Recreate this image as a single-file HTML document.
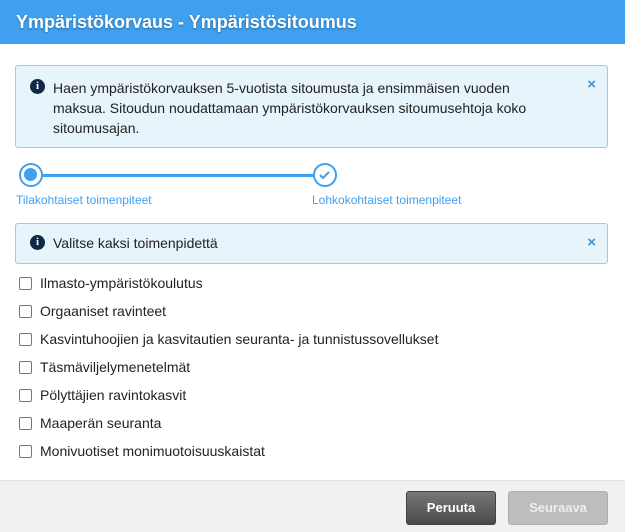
<!DOCTYPE html>
<html><head><meta charset="utf-8"><style>
*{box-sizing:border-box;margin:0;padding:0}
body{width:625px;height:532px;background:#fff;font-family:"Liberation Sans",Arial,sans-serif;color:#222;position:relative;overflow:hidden}
.hdr{position:absolute;left:0;top:0;width:625px;height:44px;background:#3fa0ef;color:#fff;font-weight:bold;font-size:18px;padding:12px 0 0 16px;text-shadow:0 1px 2px rgba(0,0,0,.35)}
.alert{position:absolute;left:15px;width:593px;background:#e7f4fb;border:1px solid #98cdea;border-radius:3px}
.ic{position:absolute;left:14px;width:15px;height:15px;border-radius:50%;background:#0e2a45;color:#fff;font:bold 11px "Liberation Serif",serif;text-align:center;line-height:15px}
.x{position:absolute;right:11px;color:#4a90c8;font-size:15px;font-weight:bold}
.msg{position:absolute;left:37px;font-size:14px;line-height:20px;color:#222}
.circ{position:absolute;width:24px;height:24px;border:2.5px solid #3fa0ef;border-radius:50%;background:#fff;top:163px}
.lbl{position:absolute;top:193px;font-size:12px;color:#3fa0ef}
.cb{position:absolute;left:19px;font-size:14px;color:#222}
.cb span{display:inline-block;width:13px;height:13px;border:1.5px solid #777;border-radius:2px;vertical-align:-2px;margin-right:8px}
.foot{position:absolute;left:0;top:480px;width:625px;height:52px;background:#f1f1f1;border-top:1px solid #e2e2e2}
.btn{position:absolute;top:491px;height:34px;border-radius:3px;color:#fff;font-weight:bold;font-size:13px;text-align:center;line-height:32px}
</style></head><body>
<div class="hdr">Ympäristökorvaus - Ympäristösitoumus</div>
<div class="alert" style="top:65px;height:83px">
<div class="ic" style="top:13px">i</div>
<div class="x" style="top:10px">×</div>
<div class="msg" style="top:12px;width:480px">Haen ympäristökorvauksen 5-vuotista sitoumusta ja ensimmäisen vuoden maksua. Sitoudun noudattamaan ympäristökorvauksen sitoumusehtoja koko sitoumusajan.</div>
</div>
<div style="position:absolute;left:38px;top:174px;width:278px;height:3px;background:#3fa0ef"></div>
<div class="circ" style="left:19px"><div style="width:13px;height:13px;border-radius:50%;background:#3fa0ef;margin:3px"></div></div>
<div class="circ" style="left:313px"><svg width="19" height="19" viewBox="0 0 19 19"><path d="M5 10l3 3 6-6" fill="none" stroke="#3fa0ef" stroke-width="2"/></svg></div>
<div class="lbl" style="left:16px">Tilakohtaiset toimenpiteet</div>
<div class="lbl" style="left:312px">Lohkokohtaiset toimenpiteet</div>
<div class="alert" style="top:223px;height:41px">
<div class="ic" style="top:11px">i</div>
<div class="x" style="top:10px">×</div>
<div class="msg" style="top:9px">Valitse kaksi toimenpidettä</div>
</div>
<div class="cb" style="top:275px"><span></span>Ilmasto-ympäristökoulutus</div>
<div class="cb" style="top:303px"><span></span>Orgaaniset ravinteet</div>
<div class="cb" style="top:331px"><span></span>Kasvintuhoojien ja kasvitautien seuranta- ja tunnistussovellukset</div>
<div class="cb" style="top:359px"><span></span>Täsmäviljelymenetelmät</div>
<div class="cb" style="top:387px"><span></span>Pölyttäjien ravintokasvit</div>
<div class="cb" style="top:415px"><span></span>Maaperän seuranta</div>
<div class="cb" style="top:443px"><span></span>Monivuotiset monimuotoisuuskaistat</div>
<div class="foot"></div>
<div class="btn" style="left:406px;width:90px;background:linear-gradient(#777,#4a4a4a);border:1px solid #444">Peruuta</div>
<div class="btn" style="left:508px;width:100px;background:#bdbdbd;border:1px solid #b0b0b0;color:#eee">Seuraava</div>
</body></html>
